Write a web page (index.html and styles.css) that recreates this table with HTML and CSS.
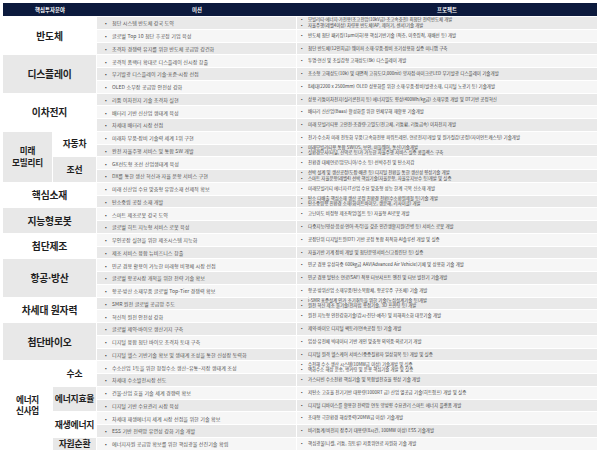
FILE: index.html
```html
<!DOCTYPE html>
<html lang="ko">
<head>
<meta charset="utf-8">
<link rel="stylesheet" href="styles.css">
</head>
<body>
<div class="page">
  <div class="head">
    <div>핵심투자분야</div>
    <div>미션</div>
    <div>프로젝트</div>
  </div>
  <div class="grid">
    <div class="cat full s3 w">반도체</div>
    <div class="m g">첨단 시스템 반도체 강국 도약</div>
    <div class="p g two"><span>모빌리티·에너지·가전용(초고전압(10kV급)·초고속충전) 최첨단 전력반도체 개발</span><span>자율주행(레벨4이상) 차량용 반도체(AP, 제어기, 센서)기술 개발</span></div>
    <div class="m l">글로벌 Top 10 첨단 후공정 기업 육성</div>
    <div class="p l"><span>반도체 첨단 패키징(1μm이하)용 핵심기반기술 (적층, 이종집적, 재배선 등) 개발</span></div>
    <div class="m g">초격차 경쟁력 유지를 위한 반도체 공급망 강건화</div>
    <div class="p g"><span>첨단 반도체(12인치급) 웨이퍼 소재·부품·장비 조기상용화 실증 미니팹 구축</span></div>

    <div class="cat full s3 c">디스플레이</div>
    <div class="m l">공격적 폼팩터 확대로 디스플레이 신시장 창출</div>
    <div class="p l"><span>투명·연신 및 초실감형 고해상도(8k) 디스플레이 개발</span></div>
    <div class="m g">무기발광 디스플레이 기술·표준·시장 선점</div>
    <div class="p g"><span>초소형 고해상도(10k) 및 대면적 고휘도(2,000nit) 양자점·마이크로LED 무기발광 디스플레이 기술개발</span></div>
    <div class="m l">OLED 소부장 공급망 안전성 강화</div>
    <div class="p l"><span>8세대(2200 x 2500mm) OLED 상용화를 위한 소재·부품·장비(발광소재, 디지털 노광기 등) 기술개발</span></div>

    <div class="cat full s3 w">이차전지</div>
    <div class="m g">리튬 이차전지 기술 초격차 실현</div>
    <div class="p g"><span>상용 리튬이차전지(실리콘전지 등) 에너지밀도 향상(400Wh/kg급) 소재부품 개발 및 DT기반 공정혁신</span></div>
    <div class="m l">배터리 기반 신산업 생태계 육성</div>
    <div class="p l"><span>배터리 신산업(Baas) 활성화를 위한 인체무해 재활용 기술개발</span></div>
    <div class="m g">차세대 배터리 시장 선점</div>
    <div class="p g"><span>미래 모빌리티용 고안전·초경량·고밀도(전고체, 리튬황, 리튬금속) 이차전지 개발</span></div>

    <div class="cat outer s4 c">미래<br>모빌리티</div>
    <div class="cat inner s2 w">자동차</div>
    <div class="m l">미래차 부품·장비 기술력 세계 1위 구현</div>
    <div class="p l"><span>전기·수소차 미래 전동화 부품(고속화전용 파워트레인, 연료전지)개발 및 원가절감(공정)(자이언트캐스팅) 기술개발</span></div>
    <div class="m g">완전 자율주행 서비스 및 통합 SW 개발</div>
    <div class="p g two"><span>미래모빌리티용 통합 SW(OS, 보안, 미들웨어, 통신)기술개발</span><span>실환경모사(터널, 산악로 등)가 가능한 자율주행 서비스 실증 콤플렉스 구축</span></div>
    <div class="cat inner s2 c">조선</div>
    <div class="m l">GX선도형 조선 산업생태계 육성</div>
    <div class="p l"><span>친환경 대체연료(암모니아/수소 등) 선박추진 및 탄소저감</span></div>
    <div class="m g">DX를 통한 생산 혁신과 자율 운항 서비스 구현</div>
    <div class="p g two"><span>선박 설계 및 생산공정(도장·배관 등) 디지털 전환을 통한 생산성 향상기술 개발</span><span>스마트 자율운항(레벨4) 선박 핵심기술(자율운항, 자율유지보수 등)개발 및 실증</span></div>

    <div class="cat full s2 w">핵심소재</div>
    <div class="m l">미래 신산업 수요 맞춤형 유망소재 선제적 확보</div>
    <div class="p l"><span>미래모빌리티 에너지·IT산업 수요 맞춤형 성능 한계 극복 신소재 개발</span></div>
    <div class="m g">탄소중립 공정 소재 개발</div>
    <div class="p g two"><span>탄소 다배출 핵심소재 생산 공정 친환경 전환(수소환원제철 등)기술 개발</span><span>탄소중립형 친환경 소재(화이트바이오, 생분해, 리사이클) 개발</span></div>

    <div class="cat full s2 c">지능형로봇</div>
    <div class="m l">스마트 제조로봇 강국 도약</div>
    <div class="p l"><span>고난이도 비정형 제조작업(볼트 등) 자율형 AI로봇 개발</span></div>
    <div class="m g">글로벌 히트 지능형 서비스 로봇 육성</div>
    <div class="p g"><span>다중지능(영상·음성·언어·촉각)을 갖춘 인간생활지원(간병 등) 서비스 로봇 개발</span></div>

    <div class="cat full s2 w">첨단제조</div>
    <div class="m l">무인공장 실현을 위한 제조시스템 지능화</div>
    <div class="p l"><span>공장단위 디지털트윈(DT) 기반 공정 통합 최적화 AI솔루션 개발 및 실증</span></div>
    <div class="m g">제조 서비스 융합 뉴비즈니스 창출</div>
    <div class="p g"><span>자율기반 기계 장비 개발 및 첨단운영서비스(고장진단 등) 실증</span></div>

    <div class="cat full s3 c">항공·방산</div>
    <div class="m l">민군 겸용 활용이 가능한 미래형 비행체 시장 선점</div>
    <div class="p l"><span>민군 겸용 유상하중 600kg급 AAV(Advanced Air Vehicle)기체 및 상용화 기술 개발</span></div>
    <div class="m g">글로벌 항공시장 개척을 위한 전략 기술 확보</div>
    <div class="p g"><span>민군 겸용 탈탄소 연료(SAF) 적용 터보샤프트 엔진 및 터보 발전기 기술개발</span></div>
    <div class="m l">항공·방산 소재부품 글로벌 Top-Tier 경쟁력 확보</div>
    <div class="p l"><span>항공·방위산업 소재부품(탄소복합체, 항공우주 구조체) 기술 개발</span></div>

    <div class="cat full s2 w">차세대 원자력</div>
    <div class="m g">SMR 원전 글로벌 공급망 주도</div>
    <div class="p g two"><span>i-SMR 표준설계 인가 조기취득을 위한 기술(노심설계기술 등)개발</span><span>원전 혁신 제조 툴기술(전자빔 용접기술, 3D 프린팅 등) 개발</span></div>
    <div class="m l">혁신적 원전 안전성 강화</div>
    <div class="p l"><span>원전 지능형 안전강화기술(감시·진단·예측) 및 피해최소화 대응기술 개발</span></div>

    <div class="cat full s3 c">첨단바이오</div>
    <div class="m g">글로벌 제약·바이오 생산기지 구축</div>
    <div class="p g"><span>제약·바이오 디지털 팩토리(연속공정 등) 기술 개발</span></div>
    <div class="m l">디지털 융합 첨단 바이오 초격차 토대 구축</div>
    <div class="p l"><span>임상·유전체 빅데이터 기반 개인 맞춤형 의약품·의료기기 개발</span></div>
    <div class="m g">디지털 헬스 기반기술 확보 및 생태계 조성을 통한 신성장 동력화</div>
    <div class="p g"><span>디지털 원격 헬스케어 서비스(중증질환자 일상회복 등) 개발 및 실증</span></div>

    <div class="cat outer s7 w">에너지<br>신사업</div>
    <div class="cat inner s2 w">수소</div>
    <div class="m l">수소산업 1등을 위한 청정수소 생산–유통–저장 생태계 조성</div>
    <div class="p l two"><span>수전해 수소 생산 시스템(10MW급 이상) 기술개발 및 실증</span><span>액화수소 해상 운송, 벙커링 및 운용 핵심기술 개발 및 실증</span></div>
    <div class="m g">차세대 수소발전시장 선도</div>
    <div class="p g"><span>가스터빈 수소전환 핵심기술 및 복합발전효율 향상 기술 개발</span></div>
    <div class="cat inner s2 c">에너지효율</div>
    <div class="m l">건물·산업 효율 기술 세계 경쟁력 확보</div>
    <div class="p l"><span>저탄소 고효율 전기기반 대용량(1000RT 급) 산업 열공급 기술(히트펌프) 개발 및 실증</span></div>
    <div class="m g">디지털 기반 수요관리 시장 육성</div>
    <div class="p g"><span>디지털 디바이스를 활용한 전력망 연동 양방향 수요관리 스마트 에너지 플랫폼 개발</span></div>
    <div class="cat inner s2 w">재생에너지</div>
    <div class="m l">차세대 재생에너지 세계 시장 선점을 위한 기술 확보</div>
    <div class="p l"><span>초대형 극한환경 해상풍력(20MW급 이상) 기술개발</span></div>
    <div class="m g">ESS 기반 전력망 유연성 강화 기술 개발</div>
    <div class="p g"><span>비리튬계/비전지 장주기 대용량(8시간, 100MW 이상) ESS 기술개발</span></div>
    <div class="cat inner s1 c">자원순환</div>
    <div class="m l">에너지자원 공급망 확보를 위한 핵심광물 선진기술 확립</div>
    <div class="p l"><span>핵심광물(니켈, 리튬, 희토류) 저품위연료 자원화 기술 개발</span></div>
  </div>
</div>
</body>
</html>
```
FILE: styles.css
```css
* { box-sizing: border-box; }
html, body { margin: 0; padding: 0; background: #fff; }
body {
  font-family: "Noto Sans CJK KR", "Noto Sans", sans-serif;
  width: 600px;
  height: 457px;
  overflow: hidden;
}
.page {
  padding: 3px 3px 0 3px;
}
.head {
  display: grid;
  grid-template-columns: 94px 200px 300px;
  height: 13px;
  background: #0c1a3d;
  color: #fff;
  font-weight: 700;
  font-size: 5.4px;
  align-items: center;
  text-align: center;
}
.grid {
  margin-top: 1px;
  display: grid;
  grid-template-columns: 49px 43px 199px 300px;
  grid-auto-rows: 11.75px;
  column-gap: 1px;
  row-gap: 1px;
}
.cat {
  display: flex;
  align-items: center;
  justify-content: center;
  text-align: center;
  font-weight: 700;
  color: #1e1e1e;
  font-size: 9.8px;
  line-height: 12px;
  letter-spacing: -0.2px;
}
.cat.outer { grid-column: 1; font-size: 8.6px; line-height: 11.5px; }
.cat.inner { grid-column: 2; font-size: 8.8px; }
.cat.full { grid-column: 1 / 3; }
.s1 { grid-row: span 1; }
.s2 { grid-row: span 2; }
.s3 { grid-row: span 3; }
.s4 { grid-row: span 4; }
.s7 { grid-row: span 7; }
.cat.w { background: #fff; }
.cat.c { background: #e8e8e8; }
.g { background: #e9e9e9; }
.l { background: #f6f6f6; }
.m {
  display: flex;
  align-items: center;
  font-size: 5.1px;
  color: #555;
  padding-left: 15px;
  position: relative;
  white-space: nowrap;
}
.m::before {
  content: "•";
  position: absolute;
  left: 8px;
  font-size: 5px;
  color: #333;
}
.p {
  display: flex;
  flex-direction: column;
  justify-content: center;
  font-size: 4.5px;
  line-height: 5.6px;
  color: #444;
  padding-left: 11px;
  white-space: nowrap;
}
.p.two { font-size: 4.4px; line-height: 5.4px; }
.p span { position: relative; }
.p span::before {
  content: "•";
  position: absolute;
  left: -7px;
  color: #333;
}
```
